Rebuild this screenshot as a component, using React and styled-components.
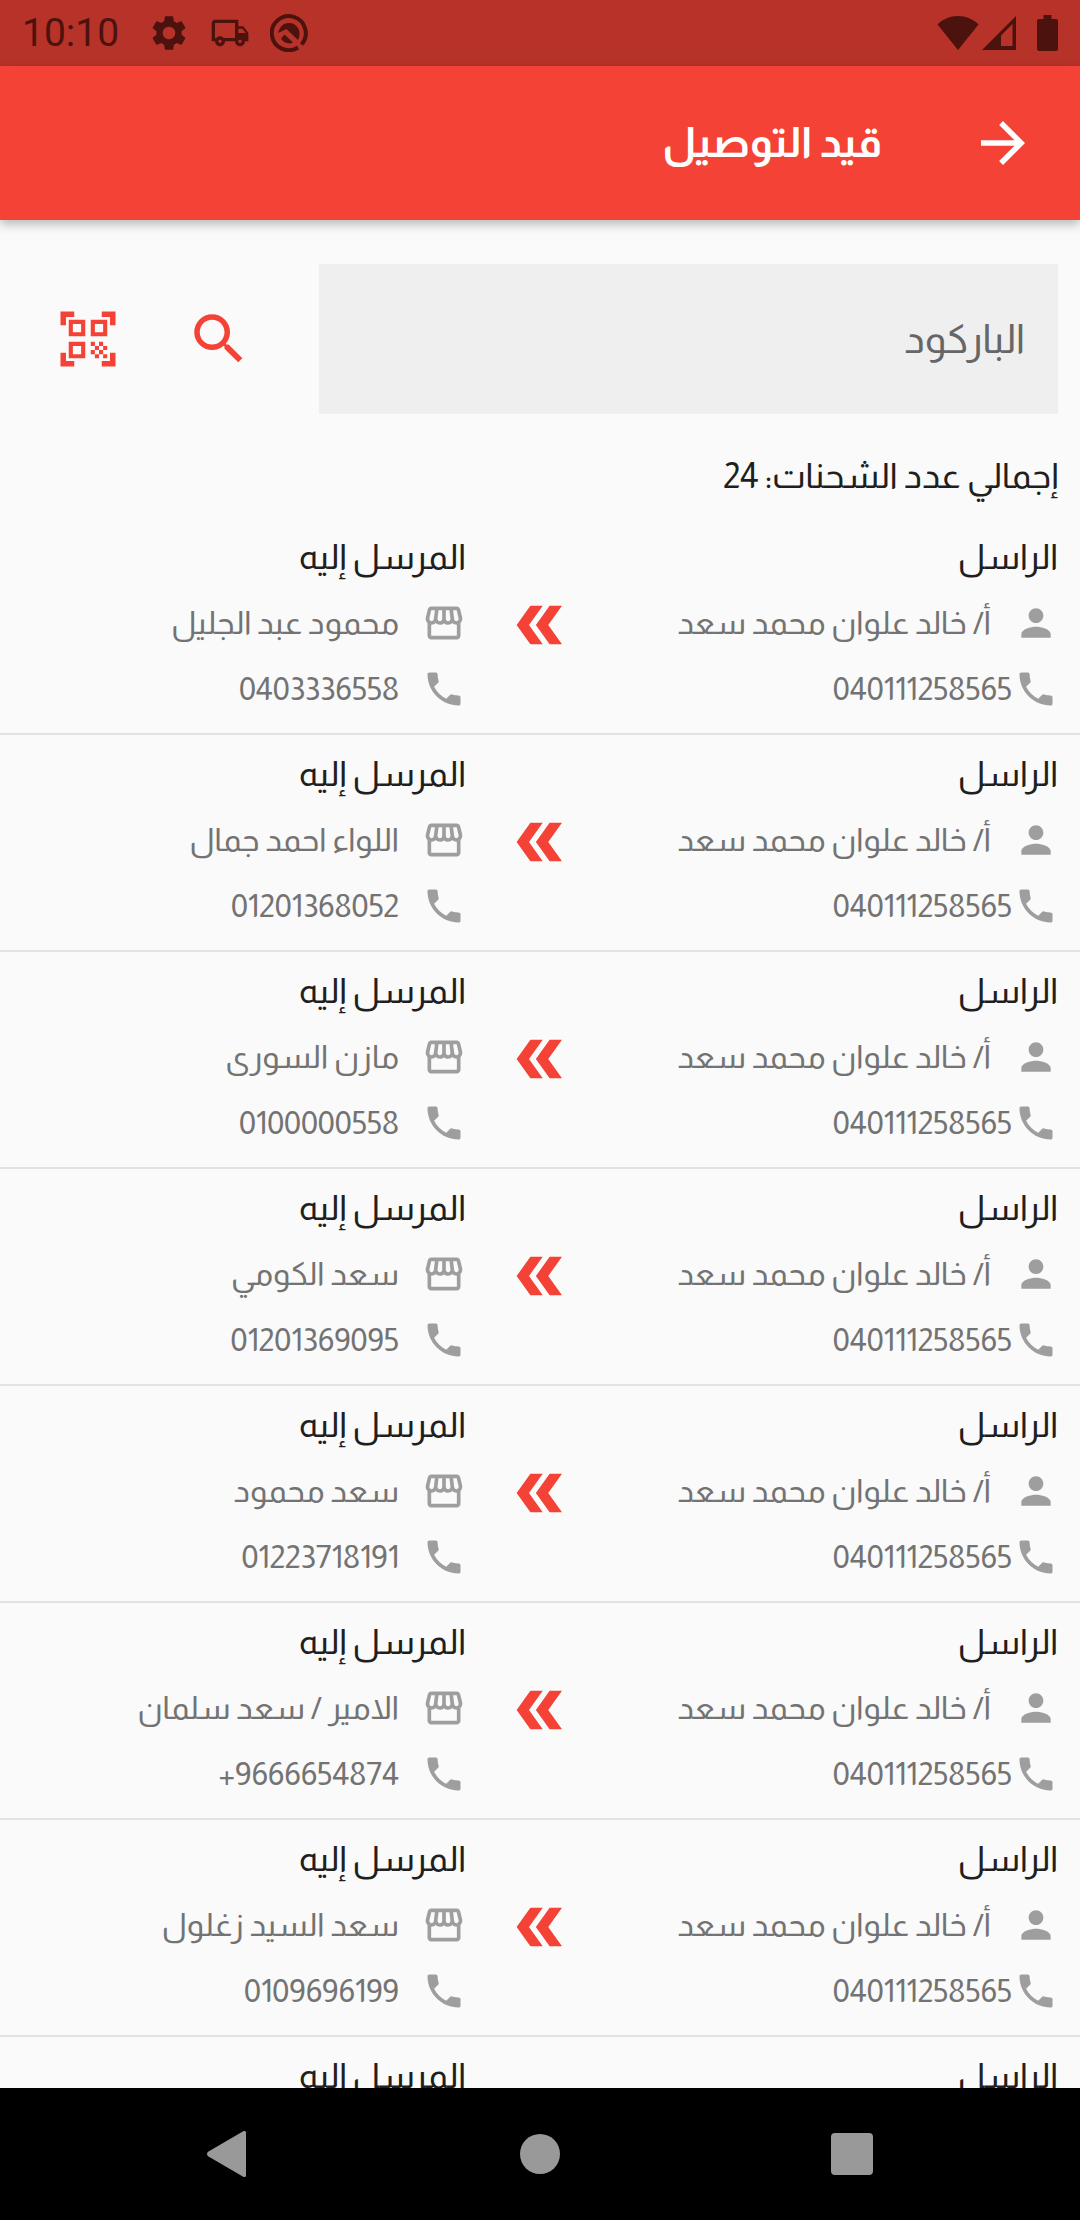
import React from 'react';
import styled, { createGlobalStyle } from 'styled-components';
import {
  MdArrowForward,
  MdDoubleArrow,
  MdOutlineLocalShipping,
  MdOutlineStorefront,
  MdPerson,
  MdPhone,
  MdQrCodeScanner,
  MdSearch,
  MdSettings,
} from 'react-icons/md';

const red = '#f44336';
const ink = '#1f1f1f';
const muted = '#737373';
const iconGrey = '#9e9e9e';
const statusInk = '#4b120e';

const GlobalStyle = createGlobalStyle`
  *, *::before, *::after { box-sizing: border-box; }
  body {
    margin: 0;
    background: #fafafa;
    color: ${ink};
    font-family: Almarai, "DejaVu Sans Condensed", "DejaVu Sans", sans-serif;
  }
  button {
    border: 0;
    padding: 0;
    background: none;
    color: inherit;
    cursor: pointer;
  }
  svg { display: block; flex: none; }
`;

const Screen = styled.div`
  display: flex;
  flex-direction: column;
  height: 100vh;
  overflow: hidden;
`;

const StatusBar = styled.div`
  display: flex;
  align-items: center;
  justify-content: space-between;
  flex: none;
  height: 66px;
  padding: 0 22px;
  background: #b73229;
  color: ${statusInk};
`;

const StatusGroup = styled.div`
  display: flex;
  align-items: center;
  gap: ${(p) => p.$gap}px;
`;

const Clock = styled.time`
  margin-right: 9px;
  font: 400 39px/66px Roboto, sans-serif;
`;

const BatterySlot = styled.span`
  padding-left: 18px;
`;

const AppBar = styled.header`
  display: flex;
  align-items: center;
  flex: none;
  height: 154px;
  padding: 0 44px;
  gap: 88px;
  background: ${red};
  color: #fff;
  box-shadow: 0 4px 10px rgba(0, 0, 0, 0.28);
  z-index: 1;
`;

const Title = styled.h1`
  margin: 0;
  font-size: 42px;
  line-height: 60px;
  font-weight: 700;
`;

const Content = styled.main`
  flex: 1;
  min-height: 0;
  overflow: hidden;
`;

const SearchForm = styled.form`
  display: flex;
  align-items: center;
  padding: 44px 22px 37px;
`;

const BarcodeInput = styled.input`
  flex: 1;
  min-width: 0;
  height: 150px;
  margin-left: 35px;
  padding: 0 33px;
  border: 0;
  border-radius: 0;
  outline: 0;
  background: #efefef;
  color: ${ink};
  font-family: inherit;
  font-size: 40px;
  line-height: 66px;
  &::placeholder { color: #666; opacity: 1; line-height: 66px; overflow: visible; }
`;

const IconButton = styled.button`
  display: grid;
  place-items: center;
  width: ${(p) => p.$width || 'auto'};
  height: 66px;
  && { color: ${(p) => p.$color || 'inherit'}; }
`;

const Total = styled.p`
  margin: 0;
  padding: 0 22px 17px;
  font-size: 35px;
  line-height: 50px;
`;

const ShipmentList = styled.ul`
  margin: 0;
  padding: 0;
  list-style: none;
`;

const Shipment = styled.li`
  display: grid;
  grid-template-columns: 3fr 1fr 3fr;
  align-items: center;
  padding: 6px 22px 11px;
  border-bottom: 2px solid #e2e2e2;
`;

const Direction = styled.div`
  display: grid;
  place-items: center;
  padding-top: 4px;
  color: ${red};
  svg { transform: scaleX(-1); }
`;

const Party = styled.section`
  min-width: 0;
`;

const PartyHeading = styled.h2`
  margin: 0;
  font-size: 35px;
  line-height: 66px;
  font-weight: 400;
`;

const Detail = styled.div`
  display: flex;
  align-items: center;
  gap: ${(p) => (p.$tight ? 2 : 23)}px;
  height: 66px;
  color: ${muted};
  font-size: 32px;
  line-height: 66px;
  white-space: nowrap;
  svg { color: ${iconGrey}; }
`;

const NavBar = styled.nav`
  display: flex;
  align-items: center;
  justify-content: space-around;
  flex: none;
  height: 132px;
  padding: 0 72px;
  background: #000;
`;

const NavButton = styled.button`
  display: grid;
  place-items: center;
  width: 88px;
  height: 88px;
  && { color: #999; }
`;

const sender = { name: 'أ/ خالد علوان محمد سعد', phone: '040111258565' };

const recipients = [
  { name: 'محمود عبد الجليل', phone: '0403336558' },
  { name: 'اللواء احمد جمال', phone: '01201368052' },
  { name: 'مازن السورى', phone: '0100000558' },
  { name: 'سعد الكومي', phone: '01201369095' },
  { name: 'سعد محمود', phone: '01223718191' },
  { name: 'الامير / سعد سلمان', phone: '+9666654874' },
  { name: 'سعد السيد زغلول', phone: '0109696199' },
];

function DebugIcon() {
  return (
    <svg width="38" height="38" viewBox="0 0 38 38" aria-hidden="true">
      <path fill="none" stroke="currentColor" strokeWidth="4" d="M31.500 30.500A17 17 0 1 0 28 33.500" />
      <path fill="currentColor" d="M8 19C10 12 14 9 19 9c6 0 10.500 5 10.500 10 0 3-.5 5-1.500 7L16.500 15z" />
      <path fill="currentColor" d="M14.500 20.500l8.500 8c-4 2-9 .8-12-4z" />
    </svg>
  );
}

function WifiIcon() {
  return (
    <svg width="42" height="36" viewBox="0 0 42 36" aria-hidden="true">
      <path fill="currentColor" d="M21 35L.5 9.500C6 4 13 1 21 1s15 3 20.500 8.500z" />
    </svg>
  );
}

function SignalIcon() {
  return (
    <svg width="36" height="36" viewBox="0 0 36 36" aria-hidden="true">
      <path fill="currentColor" fillRule="evenodd" d="M35 1v34H1zM31.500 9L20 20.500V31h11.500z" />
    </svg>
  );
}

function BatteryIcon() {
  return (
    <svg width="21" height="36" viewBox="0 0 21 36" aria-hidden="true">
      <path fill="currentColor" d="M6.500 0h8v4H19a2 2 0 0 1 2 2v28a2 2 0 0 1-2 2H2a2 2 0 0 1-2-2V6a2 2 0 0 1 2-2h4.500z" />
    </svg>
  );
}

function ShipmentRow({ recipient }) {
  return (
    <Shipment>
      <Party>
        <PartyHeading>الراسل</PartyHeading>
        {recipient && (
          <>
            <Detail>
              <MdPerson size={44} />
              <span>{sender.name}</span>
            </Detail>
            <Detail $tight>
              <MdPhone size={44} />
              <span dir="ltr">{sender.phone}</span>
            </Detail>
          </>
        )}
      </Party>
      <Direction>{recipient && <MdDoubleArrow size={66} />}</Direction>
      <Party>
        <PartyHeading>المرسل إليه</PartyHeading>
        {recipient && (
          <>
            <Detail>
              <MdOutlineStorefront size={44} />
              <span>{recipient.name}</span>
            </Detail>
            <Detail>
              <MdPhone size={44} />
              <span dir="ltr">{recipient.phone}</span>
            </Detail>
          </>
        )}
      </Party>
    </Shipment>
  );
}

export default function App() {
  return (
    <Screen dir="rtl" lang="ar">
      <GlobalStyle />
      <StatusBar dir="ltr">
        <StatusGroup $gap={20}>
          <Clock>10:10</Clock>
          <MdSettings size={42} />
          <MdOutlineLocalShipping size={40} />
          <DebugIcon />
        </StatusGroup>
        <StatusGroup $gap={2}>
          <WifiIcon />
          <SignalIcon />
          <BatterySlot>
            <BatteryIcon />
          </BatterySlot>
        </StatusGroup>
      </StatusBar>
      <AppBar>
        <IconButton type="button" aria-label="رجوع">
          <MdArrowForward size={66} />
        </IconButton>
        <Title>قيد التوصيل</Title>
      </AppBar>
      <Content>
        <SearchForm onSubmit={(e) => e.preventDefault()}>
          <BarcodeInput type="text" aria-label="الباركود" placeholder="الباركود" />
          <IconButton type="submit" aria-label="بحث" $width="131px" $color={red}>
            <MdSearch size={66} />
          </IconButton>
          <IconButton type="button" aria-label="مسح الرمز" $width="131px" $color={red}>
            <MdQrCodeScanner size={66} />
          </IconButton>
        </SearchForm>
        <Total>إجمالي عدد الشحنات: 24</Total>
        <ShipmentList>
          {recipients.map((recipient) => (
            <ShipmentRow key={recipient.phone} recipient={recipient} />
          ))}
          <ShipmentRow />
        </ShipmentList>
      </Content>
      <NavBar dir="ltr">
        <NavButton type="button" aria-label="Back">
          <svg width="44" height="48" viewBox="0 0 44 48" aria-hidden="true">
            <path fill="currentColor" d="M40 2.500v43c0 1.500-1.500 2-2.800 1.200L2.500 26.500c-2-1.200-2-3.800 0-5L37.200 1.300C38.500.5 40 1 40 2.500z" />
          </svg>
        </NavButton>
        <NavButton type="button" aria-label="Home">
          <svg width="42" height="42" viewBox="0 0 42 42" aria-hidden="true">
            <circle cx="21" cy="21" r="20" fill="currentColor" />
          </svg>
        </NavButton>
        <NavButton type="button" aria-label="Recent apps">
          <svg width="42" height="42" viewBox="0 0 42 42" aria-hidden="true">
            <rect width="42" height="42" rx="4" fill="currentColor" />
          </svg>
        </NavButton>
      </NavBar>
    </Screen>
  );
}
